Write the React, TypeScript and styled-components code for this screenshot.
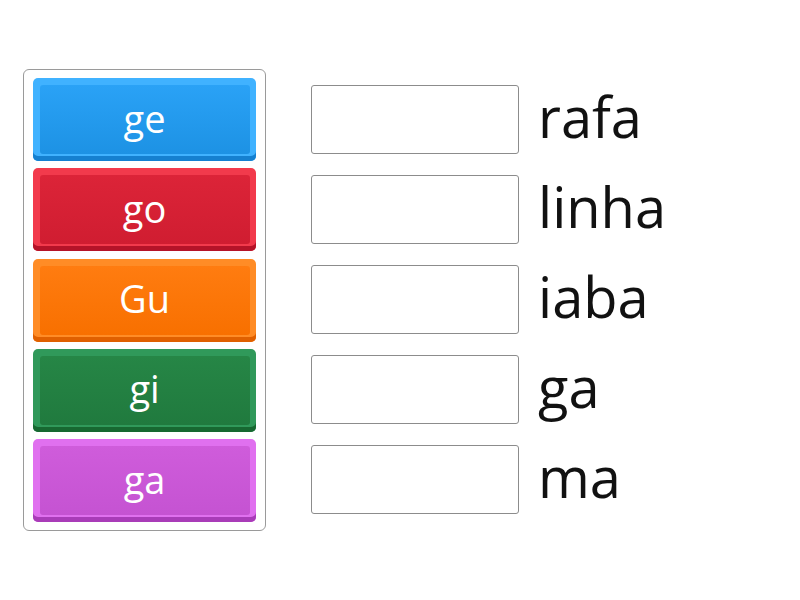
import React from 'react';
import styled, { createGlobalStyle } from 'styled-components';

interface TileColors {
  edge: string
  top: string
  bottom: string
  shade: string
}

const tiles: { label: string; colors: TileColors }[] = [
  { label: 'ge', colors: { edge: '#40b2ff', top: '#2aa2f6', bottom: '#1d92e4', shade: '#1580d0' } },
  { label: 'go', colors: { edge: '#f23a4c', top: '#dc2438', bottom: '#d01d31', shade: '#b51328' } },
  { label: 'Gu', colors: { edge: '#ff8c26', top: '#ff7c10', bottom: '#f87000', shade: '#e06000' } },
  { label: 'gi', colors: { edge: '#30995a', top: '#268646', bottom: '#207a3e', shade: '#176831' } },
  { label: 'ga', colors: { edge: '#e070ef', top: '#cf5cdb', bottom: '#c553d2', shade: '#a93cb8' } },
];

const words = ['rafa', 'linha', 'iaba', 'ga', 'ma'];

const App = (): JSX.Element => {
  return (
    <>
      <GlobalStyle />
      <Page>
        <Bank>
          {tiles.map((t) => (
            <Tile key={t.label} $c={t.colors}>
              <TileLabel>{t.label}</TileLabel>
            </Tile>
          ))}
        </Bank>
        <Targets>
          {words.map((w) => (
            <Row key={w}>
              <Slot />
              <Word>{w}</Word>
            </Row>
          ))}
        </Targets>
      </Page>
    </>
  );
};

export default App;

const GlobalStyle = createGlobalStyle`
  body {
    margin: 0;
    background: #fff;
    font-family: 'Open Sans', 'Liberation Sans', sans-serif;
  }
`;

const Page = styled.div`
  display: flex;
  align-items: flex-start;
  gap: 45px;
  padding: 69px 0 0 23px;
  width: 800px;
  height: 600px;
  box-sizing: border-box;
`;

const Bank = styled.div`
  width: 243px;
  box-sizing: border-box;
  border: 1px solid #9a9a9a;
  border-radius: 6px;
  padding: 8px 9px;
  display: flex;
  flex-direction: column;
  gap: 7.25px;
`;

const Tile = styled.div<{ $c: TileColors }>`
  position: relative;
  height: 83px;
  border-radius: 5px;
  background: ${({ $c }) => $c.edge};
  box-shadow: inset 0 -5px 0 ${({ $c }) => $c.shade};
  display: flex;
  align-items: center;
  justify-content: center;
  &:before {
    content: '';
    position: absolute;
    top: 7px;
    left: 7px;
    right: 6px;
    bottom: 7px;
    border-radius: 3px;
    background: linear-gradient(${({ $c }) => $c.top}, ${({ $c }) => $c.bottom});
  }
`;

const TileLabel = styled.span`
  position: relative;
  color: #fff;
  font-size: 38px;
  font-weight: 500;
  line-height: 1;
  margin-top: -4px;
`;

const Targets = styled.div`
  display: flex;
  flex-direction: column;
  gap: 21px;
  padding-top: 16px;
`;

const Row = styled.div`
  display: flex;
  align-items: center;
  gap: 19px;
`;

const Slot = styled.div`
  width: 208px;
  height: 69px;
  box-sizing: border-box;
  border: 1px solid #8c8c8c;
  border-radius: 3px;
`;

const Word = styled.span`
  font-size: 56px;
  line-height: 1;
  color: #111;
  margin-top: -8px;
`;
